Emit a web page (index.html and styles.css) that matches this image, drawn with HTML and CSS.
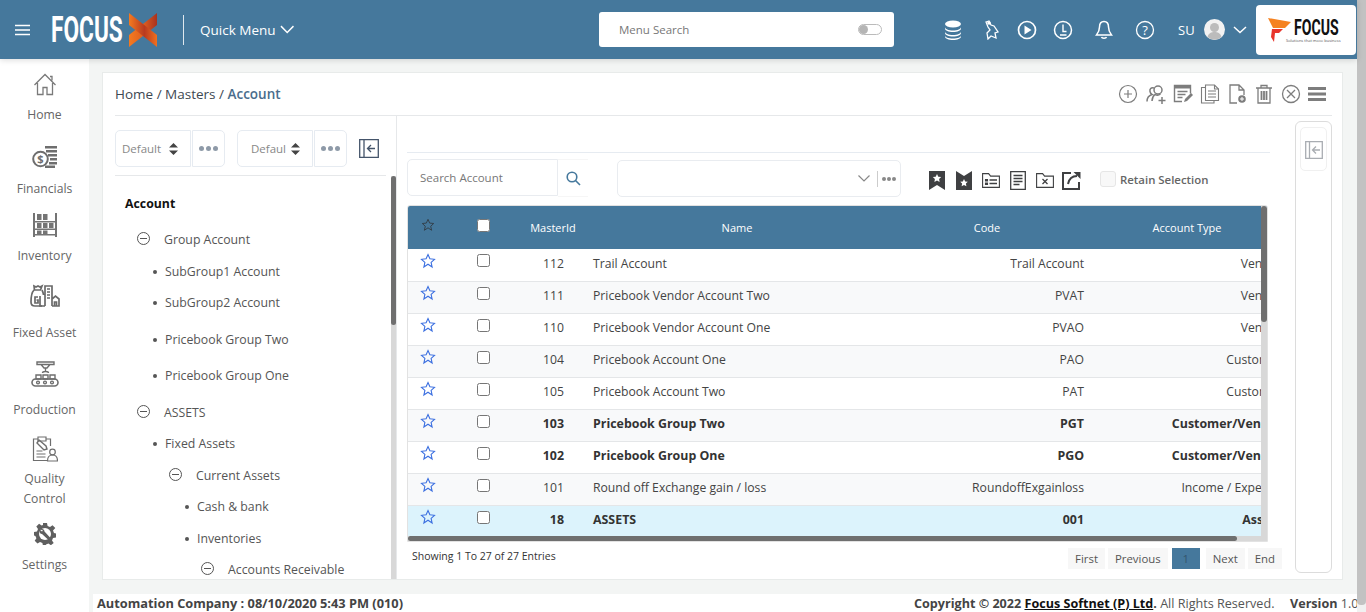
FILE: index.html
```html
<!DOCTYPE html>
<html lang="en">
<head>
  <meta charset="UTF-8">
  <title>Focus X - Account</title>
  <link rel="stylesheet" href="styles.css">
</head>
<body>
<div class="page">
  <header class="topbar">
    <svg class="burger" width="16" height="12" viewBox="0 0 16 12"><path d="M0 1.500h15M0 6h15M0 10.500h15" stroke="#fff" stroke-width="1.700"/></svg>
    <div class="brand">
      <span class="brand-word"><span>FOCUS</span></span>
      <svg width="28" height="34" viewBox="0 0 28 34">
        <defs>
          <linearGradient id="xa" x1="0" x2="1" y1="0" y2="0"><stop offset="0" stop-color="#f47a20"/><stop offset=".55" stop-color="#b93a1f"/><stop offset="1" stop-color="#f0701f"/></linearGradient>
          <linearGradient id="xb" x1="0" x2="1" y1="0" y2="0"><stop offset="0" stop-color="#f47a20"/><stop offset=".5" stop-color="#e0601f"/><stop offset="1" stop-color="#a8321f"/></linearGradient>
        </defs>
        <path d="M28 0v12L0 34V22z" fill="url(#xb)"/>
        <path d="M0 0l28 22v12L0 12z" fill="url(#xa)"/>
      </svg>
    </div>
    <div class="quick-menu">
      Quick Menu
      <svg width="15" height="9" viewBox="0 0 15 9"><path d="M1 1l6.500 6.500L14 1" fill="none" stroke="#fff" stroke-width="1.500"/></svg>
    </div>
    <div class="menu-search">
      <span>Menu Search</span>
      <i class="toggle"></i>
    </div>
    <svg class="ti-db" width="18" height="20" viewBox="0 0 18 20"><ellipse cx="9" cy="4" rx="8" ry="3.500" fill="#fff"/><path d="M1 7c0 2 3.500 3.500 8 3.500S17 9 17 7v1.500C17 10.500 13.500 12 9 12s-8-1.500-8-3.500zM1 11.500c0 2 3.500 3.500 8 3.500s8-1.500 8-3.500V13c0 2-3.500 3.500-8 3.500S1 15 1 13zM1 15.500c0 2 3.500 3 8 3s8-1 8-3v1c0 2-3.500 3.500-8 3.500s-8-1.500-8-3.500z" fill="#fff"/></svg>
    <svg class="ti-run" width="16" height="20" viewBox="0 0 16 20"><path d="M2 2l3-1 2 4 3 1 4 6-3 1 1 5-5-2-3 3-1-6 3-3-2-3z" fill="none" stroke="#fff" stroke-width="1.300"/><circle cx="5" cy="3" r="1.800" fill="#fff"/></svg>
    <svg class="ti-play" width="20" height="20" viewBox="0 0 20 20"><circle cx="10" cy="10" r="8.500" fill="none" stroke="#fff" stroke-width="1.700"/><path d="M7.500 5.500l7 4.500-7 4.500z" fill="#fff"/></svg>
    <svg class="ti-clock" width="20" height="20" viewBox="0 0 20 20"><circle cx="10" cy="10" r="8.500" fill="none" stroke="#fff" stroke-width="1.500"/><path d="M10 4.500v7h3.500M7 15h6.500" fill="none" stroke="#fff" stroke-width="1.400"/></svg>
    <svg class="ti-bell" width="18" height="20" viewBox="0 0 18 20"><path d="M9 1.500c-3 0-4.500 2.500-4.500 5.500 0 4-1 5.500-3 8h15c-2-2.500-3-4-3-8 0-3-1.500-5.500-4.500-5.500zM6.500 17c.5 1.500 4.500 1.500 5 0" fill="none" stroke="#fff" stroke-width="1.500"/></svg>
    <svg class="ti-help" width="20" height="20" viewBox="0 0 20 20"><circle cx="10" cy="10" r="8.500" fill="none" stroke="#fff" stroke-width="1.300"/><text x="10" y="14.500" text-anchor="middle" class="help-q">?</text></svg>
    <span class="user-code">SU</span>
    <svg class="avatar" width="21" height="21" viewBox="0 0 21 21"><circle cx="10.500" cy="10.500" r="10.500" fill="#f2f2f2"/><circle cx="10.500" cy="8.500" r="4.500" fill="#bcbcbc"/><path d="M3.500 18c1-4 4-5 7-5s6 1 7 5a10.500 10.500 0 0 1-14 0z" fill="#bcbcbc"/></svg>
    <svg class="user-chev" width="14" height="8" viewBox="0 0 14 8"><path d="M1 1l6 5.500L13 1" fill="none" stroke="#fff" stroke-width="1.500"/></svg>
    <div class="company-logo">
      <svg width="23" height="24" viewBox="0 0 23 24"><path d="M0 0l23 4-6 6H5z" fill="#f58220"/><path d="M4 11h11l-4 4H7l-1 9-3-5z" fill="#e8352b"/></svg>
      <div class="company-text">
        <span class="company-word"><span>FOCUS</span></span>
        <small>Solutions that move business</small>
      </div>
    </div>
  </header>

  <div class="workspace">
    <nav class="sidebar">
      <a class="nav-item nav-home">
        <svg width="24" height="24" viewBox="0 0 24 24" fill="none" stroke="#7a7a7a" stroke-width="1.300"><path d="M1.500 12L12 1.500 22.500 12M4.500 10v11.500h5.500v-7h4v7h5.500V10M17 3.500h2v4"/></svg>
        <span>Home</span>
      </a>
      <a class="nav-item nav-fin">
        <svg width="26" height="24" viewBox="0 0 26 24"><circle cx="8.500" cy="14" r="7.300" fill="none" stroke="#6e6e6e" stroke-width="2"/><path d="M13 1h12v2.500H13zM14 5h11v2.500H14zM16 9h9v2.500h-9zM18 13h7v2.500h-7zM17 17h8v2.500h-8zM13 20.500h10V23H13z" fill="#6e6e6e"/><text x="8.500" y="18" text-anchor="middle" class="coin">$</text></svg>
        <span>Financials</span>
      </a>
      <a class="nav-item nav-inv">
        <svg width="24" height="24" viewBox="0 0 24 24"><path d="M0 0h2v24H0zM22 0h2v24h-2zM2 8h20v1.500H2zM2 15.500h20V17H2zM2 21h20v1.500H2z" fill="#747474"/><path d="M4 1h4.500v6H4zM10 1h4.500v6H10zM4 10h4.500v5H4zM10 10h4.500v5H10zM16 10h4.500v5H16zM4 17.500h4.500V21H4zM10 17.500h4.500V21H10z" fill="#747474"/></svg>
        <span>Inventory</span>
      </a>
      <a class="nav-item nav-asset">
        <svg width="30" height="24" viewBox="0 0 30 24" fill="none" stroke="#6a6a6a" stroke-width="1.700"><path d="M4 2l2 1 2-1 2 1 2-1-1.500 4h-6zM4 6C1 9 1 14 1 18c0 3 1 4 4 4h7"/><path d="M12 6c1 2 1.500 3 1.500 5M15 22V2h7v20M17 5h3M17 8h3M17 11h3M17 14h3M10 12v10h5M22 15l3.500-3 3.500 3v7h-7M24.500 18h2v4h-2z"/><path d="M8 13H5v6h3v-3H6.500"/></svg>
        <span>Fixed Asset</span>
      </a>
      <a class="nav-item nav-prod">
        <svg width="28" height="26" viewBox="0 0 28 26" fill="none" stroke="#6e6e6e" stroke-width="1.400"><path d="M6 1h17v2.500H6zM10 3.500h9L16 7h-3zM14.500 7v3M11.500 12c0-2 6-2 6 0"/><path d="M5 14h5v4H5zM12 14h5v4h-5zM19 14h5v4h-5z"/><rect x="1" y="18" width="26" height="7" rx="3.500" stroke-width="1.600"/><circle cx="7" cy="21.500" r="1.400"/><circle cx="14" cy="21.500" r="1.400"/><circle cx="21" cy="21.500" r="1.400"/></svg>
        <span>Production</span>
      </a>
      <a class="nav-item nav-qc">
        <svg width="26" height="26" viewBox="0 0 26 26" fill="none" stroke="#6e6e6e" stroke-width="1.200"><path d="M6 3H1.500v21.500H16M14 3h4.500v7"/><path d="M6 1h8v4H6zM4.500 18h9M4.500 21h9M4.500 15h6"/><path d="M5 7l7 7 3-1-1-3-7-6z" stroke-width="1.400"/><circle cx="20.500" cy="16" r="2.800"/><path d="M15.500 25c0-5 2-6 5-6s5 1 5 6z"/></svg>
        <span>Quality<br>Control</span>
      </a>
      <a class="nav-item nav-set">
        <svg width="22" height="22" viewBox="0 0 22 22"><path d="M9 0h4l.6 3 2.400 1 2.500-1.700 2.800 2.800L19 7.600l1 2.400 2 .6v3.800l-3 .6-1 2.400 1.700 2.500-2.800 2.300-2.500-1.700-2.400 1-.5 1.400H9l-.6-3-2.400-1-2.500 1.700L.7 17.800 2.400 15.300l-1-2.400L0 12.500V9l3-.6 1-2.400L2.300 3.500 5.100.7l2.500 1.700L9 2z" fill="#5f5f5f"/><circle cx="11" cy="11" r="6" fill="#fff"/><path d="M6.500 6.500c2-1 4 0 4 2l6 6.500-2 2-6.500-6c-2 0-3-2-2-4l2 1.500 1-1z" fill="#5f5f5f"/></svg>
        <span>Settings</span>
      </a>
    </nav>

    <div class="main-col">
      <section class="card">
        <div class="card-head">
          <div class="crumbs">Home / Masters / <b>Account</b></div>
          <div class="actions">
            <svg width="20" height="20" viewBox="0 0 20 20" fill="none" stroke="#7d7d7d" stroke-width="1.200"><circle cx="10" cy="10" r="8.500"/><path d="M10 6v8M6 10h8"/></svg>
            <svg width="20" height="20" viewBox="0 0 20 20" fill="none" stroke="#7d7d7d" stroke-width="1.500"><circle cx="12" cy="6" r="4"/><path d="M8 4C5 3 3.500 5 4 7.500c.3 1.500 1 2.500 2 3-3 1-5 3-5 7M6 17c0-3 1-5 3-6.500 2 1 3.500 1 5.500-.5M16 13v7M12.500 16.500h7"/></svg>
            <svg width="20" height="20" viewBox="0 0 20 20" fill="none" stroke="#7d7d7d" stroke-width="1.400"><path d="M9 17.500H1.500V1.500h16v8"/><path d="M1 2h17v2.500H1z" fill="#7d7d7d" stroke="none"/><path d="M4.500 7.500h10M4.500 10.500h8M4.500 13.500h5"/><path d="M11 18l1-3 6-6 2 2-6 6z" fill="#7d7d7d" stroke="none"/></svg>
            <svg width="20" height="20" viewBox="0 0 20 20" fill="none" stroke="#7d7d7d" stroke-width="1.100"><path d="M6 3.500H1.500v15.500h12.500v-3"/><path d="M5.500 1h9l4 4v11.500h-13z"/><path d="M14.500 1v4h4M8 7h8M8 10h8M8 13h8"/></svg>
            <svg width="20" height="20" viewBox="0 0 20 20" fill="none" stroke="#7d7d7d" stroke-width="1.300"><path d="M9 19H2V1h9l5 5v5M11 1v5h5"/><circle cx="14" cy="15" r="3.800" fill="#7d7d7d" stroke="none"/><path d="M12 15h4M14 13v4" stroke="#fff" stroke-width="1"/></svg>
            <svg width="18" height="20" viewBox="0 0 18 20" fill="none" stroke="#7d7d7d" stroke-width="1.300"><path d="M1 4h16M6 3.500V1.500h6v2M3 4.500v14.500h12V4.500"/><path d="M6.500 7v9M9 7v9M11.500 7v9" stroke-width="1.800"/></svg>
            <svg width="20" height="20" viewBox="0 0 20 20" fill="none" stroke="#7d7d7d" stroke-width="1.300"><circle cx="10" cy="10" r="8.500"/><path d="M6 6l8 8M14 6l-8 8"/></svg>
            <svg width="18" height="14" viewBox="0 0 18 14"><path d="M0 0h18v3H0zM0 5.500h18v3H0zM0 11h18v3H0z" fill="#7d7d7d"/></svg>
          </div>
        </div>

        <div class="card-body">
          <div class="tree-pane">
            <div class="tree-tools">
              <div class="select-box">Default <svg width="9" height="12" viewBox="0 0 9 12"><path d="M4.500 0L9 4.500H0zM4.500 12L0 7.500h9z" fill="#444"/></svg></div>
              <div class="dots-box"><i></i><i></i><i></i></div>
              <div class="select-box second">Defaul <svg width="9" height="12" viewBox="0 0 9 12"><path d="M4.500 0L9 4.500H0zM4.500 12L0 7.500h9z" fill="#444"/></svg></div>
              <div class="dots-box"><i></i><i></i><i></i></div>
              <svg class="collapse-ico" width="20" height="19" viewBox="0 0 20 19" fill="none" stroke="#44546a" stroke-width="1.300"><path d="M.7.700h18.600v17.600H.7zM5 .7v17.600"/><path d="M16 9.500H8.500M12 6L8.500 9.500 12 13"/></svg>
            </div>
            <div class="tree-scroll">
              <div class="tree">
                <div class="tree-title">Account</div>
                <div class="tree-row lvl1 first"><span class="minus"></span>Group Account</div>
                <div class="tree-row lvl2 bullet">SubGroup1 Account</div>
                <div class="tree-row lvl2 bullet">SubGroup2 Account</div>
                <div class="tree-row lvl2 bullet tall">Pricebook Group Two</div>
                <div class="tree-row lvl2 bullet tall">Pricebook Group One</div>
                <div class="tree-row lvl1 tall"><span class="minus"></span>ASSETS</div>
                <div class="tree-row lvl2 bullet">Fixed Assets</div>
                <div class="tree-row lvl3"><span class="minus"></span>Current Assets</div>
                <div class="tree-row lvl4 bullet">Cash &amp; bank</div>
                <div class="tree-row lvl4 bullet">Inventories</div>
                <div class="tree-row lvl5"><span class="minus"></span>Accounts Receivable</div>
              </div>
              <div class="sb-v tree-sb"><i></i></div>
            </div>
          </div>

          <div class="list-pane">
            <div class="list-tools">
              <div class="search-box">Search Account</div>
              <div class="search-btn"><svg width="15" height="15" viewBox="0 0 15 15" fill="none" stroke="#45789c" stroke-width="1.600"><circle cx="6" cy="6" r="4.800"/><path d="M9.500 9.500L14 14"/></svg></div>
              <div class="view-select">
                <svg width="12" height="7" viewBox="0 0 12 7"><path d="M.5.500L6 6 11.500.5" fill="none" stroke="#888" stroke-width="1.200"/></svg>
                <span class="vs-sep"></span>
                <span class="dots-inline"><i></i><i></i><i></i></span>
              </div>
              <div class="list-icons">
                <svg width="16" height="19" viewBox="0 0 16 19"><path d="M0 0h16v19l-8-5-8 5z" fill="#3f4042"/><path d="M8 3l1.300 2.700 2.900.4-2.100 2 .5 2.900L8 9.600 5.400 11l.5-2.900-2.100-2 2.900-.4z" fill="#fff"/></svg>
                <svg width="16" height="19" viewBox="0 0 16 19"><path d="M0 0l8 5 8-5v19H0z" fill="#3f4042"/><path d="M8 8l1.200 2.400 2.600.4-1.900 1.800.5 2.600L8 14l-2.400 1.200.5-2.600-1.900-1.800 2.600-.4z" fill="#fff"/></svg>
                <svg width="18" height="15" viewBox="0 0 18 15" fill="none" stroke="#3f4042" stroke-width="1.100"><path d="M.6 14.400V.6h6l2 2.500h8.800v11.300z"/><path d="M3.500 6.500h2v1.500h-2zM3.500 10h2v1.500h-2z" fill="#3f4042"/><path d="M7.500 7h7.500M7.500 10.500h7.500" stroke-width="1.400"/></svg>
                <svg width="16" height="19" viewBox="0 0 16 19" fill="none" stroke="#3f4042" stroke-width="1.300"><path d="M.7.700h14.600v17.600H.7z"/><path d="M3.500 4.500h9M3.500 7.500h9M3.500 10.500h9M3.500 13.500h6" stroke-width="1.400"/></svg>
                <svg width="18" height="15" viewBox="0 0 18 15" fill="none" stroke="#3f4042" stroke-width="1.100"><path d="M.6 14.400V.6h6l2 2.500h8.800v11.300z"/><path d="M6.500 6l5 5M11.500 6l-5 5" stroke-width="1.300"/></svg>
                <svg width="19" height="19" viewBox="0 0 19 19" fill="none" stroke="#3f4042" stroke-width="2"><path d="M9 2H1v16h16v-7"/><path d="M6 13c1-5 4-8 9-8"/><path d="M11.500 1H18.500v7z" fill="#3f4042" stroke="none"/></svg>
              </div>
              <label class="retain"><i></i>Retain Selection</label>
            </div>

            <div class="grid-wrap">
              <table class="grid">
                <colgroup>
                  <col class="c-star"><col class="c-check"><col class="c-id"><col class="c-name"><col class="c-code"><col class="c-type">
                </colgroup>
                <thead>
                  <tr>
                    <th class="th-ctl"><svg class="star" width="14" height="14" viewBox="0 0 16 16"><path d="M8 1.500l1.900 4.300 4.600.5-3.400 3.100 1 4.600L8 11.200l-4.100 2.800 1-4.600L1.500 6.300l4.600-.5z" fill="none" stroke="#333f4a" stroke-width="1.100"/></svg></th>
                    <th class="th-ctl"><input type="checkbox" class="head-check"></th>
                    <th>MasterId</th><th>Name</th><th>Code</th><th>Account Type</th>
                  </tr>
                </thead>
                <tbody id="rows"></tbody>
              </table>
              <div class="sb-v grid-sb"><i></i></div>
              <div class="sb-h"><i></i></div>
            </div>

            <div class="list-foot">
              <span class="entries">Showing 1 To 27 of 27 Entries</span>
              <div class="pager">
                <a>First</a><a>Previous</a><a class="active">1</a><a class="next">Next</a><a>End</a>
              </div>
            </div>
          </div>

          <aside class="side-panel">
            <div class="side-btn">
              <svg width="18" height="18" viewBox="0 0 18 18" fill="none" stroke="#a9adb2" stroke-width="1.300"><path d="M.7.700h16.600v16.600H.7zM4.500.7v16.600"/><path d="M15 9H7.500M11 5.500L7.500 9l3.500 3.500"/></svg>
            </div>
          </aside>
        </div>
      </section>

      <footer class="status">
        <span class="st-company">Automation Company : 08/10/2020 5:43 PM (010)</span>
        <span class="st-copy"><b>Copyright © 2022 <u>Focus Softnet (P) Ltd</u>.</b> All Rights Reserved.</span>
        <span class="st-ver"><b>Version</b> 1.0.0</span>
      </footer>
    </div>
  </div>
</div>
<div class="page-scroll"><i></i></div>

<script>
  var data = [
    ["112", "Trail Account", "Trail Account", "Vendor"],
    ["111", "Pricebook Vendor Account Two", "PVAT", "Vendor"],
    ["110", "Pricebook Vendor Account One", "PVAO", "Vendor"],
    ["104", "Pricebook Account One", "PAO", "Customer"],
    ["105", "Pricebook Account Two", "PAT", "Customer"],
    ["103", "Pricebook Group Two", "PGT", "Customer/Vendor", "bold"],
    ["102", "Pricebook Group One", "PGO", "Customer/Vendor", "bold"],
    ["101", "Round off Exchange gain / loss", "RoundoffExgainloss", "Income / Expense"],
    ["18", "ASSETS", "001", "Assets", "bold sel"]
  ];
  var star = '<svg class="star" width="16" height="16" viewBox="0 0 16 16"><path d="M8 1.500l1.900 4.300 4.600.5-3.400 3.100 1 4.600L8 11.200l-4.100 2.800 1-4.600L1.500 6.300l4.600-.5z" fill="none" stroke="#3b6fe0" stroke-width="1.100"/></svg>';
  var html = "";
  data.forEach(function (r) {
    html += '<tr class="' + (r[4] || "") + '"><td>' + star + '</td><td><input type="checkbox"></td>' +
      '<td class="num">' + r[0] + '</td><td>' + r[1] + '</td><td class="right">' + r[2] + '</td><td class="right">' + r[3] + '</td></tr>';
  });
  document.getElementById("rows").innerHTML = html;
</script>
</body>
</html>
```

FILE: styles.css
```css
* { box-sizing: border-box; }

html, body {
  margin: 0;
  height: 100%;
  overflow: hidden;
}

body {
  display: flex;
  font-family: 'Open Sans', 'Noto Sans', sans-serif;
  font-size: 12px;
  color: #444;
  background: #f3f5f4;
}

.page {
  flex: 1;
  min-width: 0;
  display: flex;
  flex-direction: column;
}

.page-scroll {
  width: 9px;
  flex: none;
  background: #f1f1f1;
}

.page-scroll i {
  display: block;
  height: 605px;
  border-radius: 0 0 4px 4px;
  background: #c2c2c2;
}

/* top bar */
.topbar {
  height: 59px;
  flex: none;
  display: flex;
  align-items: center;
  background: #45789c;
  color: #fff;
  box-shadow: 0 1px 6px rgba(0, 0, 0, 0.15);
  position: relative;
  z-index: 2;
}

.topbar > * { flex: none; }

.burger { margin-left: 15px; }

.brand {
  display: flex;
  align-items: center;
  margin-left: 20px;
  width: 107px;
}

.brand-word {
  display: block;
  width: 78px;
  height: 40px;
  line-height: 40px;
  font-family: Roboto, sans-serif;
  font-weight: 700;
  font-size: 36px;
}

.brand-word span {
  display: inline-block;
  transform: scaleX(0.63);
  transform-origin: left center;
}

.quick-menu {
  display: flex;
  align-items: center;
  gap: 4px;
  height: 30px;
  margin-left: 25px;
  padding-left: 16px;
  border-left: 1px solid #dfe8ee;
  font-size: 13.500px;
  width: 111px;
  white-space: nowrap;
}

.menu-search {
  width: 295px;
  height: 35px;
  margin-left: 305px;
  padding: 0 12px 0 20px;
  display: flex;
  align-items: center;
  justify-content: space-between;
  background: #fff;
  border-radius: 3px;
  color: #777;
  font-size: 11.500px;
}

.toggle {
  display: block;
  width: 24px;
  height: 11px;
  border: 1px solid #bbb;
  border-radius: 6px;
  position: relative;
}

.toggle::before {
  content: "";
  position: absolute;
  left: 0;
  top: 0;
  width: 9px;
  height: 9px;
  border-radius: 50%;
  background: #b5b5b5;
}

.ti-db { margin-left: 50px; }
.ti-run { margin-left: 22px; }
.ti-play { margin-left: 17px; }
.ti-clock { margin-left: 16px; }
.ti-bell { margin-left: 22px; }
.ti-help { margin-left: 22px; }

.help-q {
  font-family: 'Open Sans', sans-serif;
  font-size: 13px;
  fill: #fff;
}

.user-code {
  width: 17px;
  margin-left: 23px;
  font-size: 13px;
}

.avatar { margin-left: 9px; }
.user-chev { margin-left: 8px; }

.company-logo {
  width: 100px;
  height: 50px;
  margin-left: 9px;
  padding-left: 12px;
  display: flex;
  align-items: center;
  gap: 3px;
  background: #fff;
  border-radius: 4px;
  color: #111;
}

.company-text {
  width: 56px;
  padding-top: 2px;
}

.company-word {
  display: block;
  height: 19px;
  line-height: 19px;
  font-family: Roboto, sans-serif;
  font-weight: 700;
  font-size: 22px;
}

.company-word span {
  display: inline-block;
  transform: scaleX(0.64);
  transform-origin: left center;
}

.company-text small {
  display: block;
  margin: 1px 0 0 -8px;
  font-size: 4px;
  line-height: 5px;
  color: #555;
  white-space: nowrap;
}

/* below the bar */
.workspace {
  flex: 1;
  min-height: 0;
  display: flex;
}

.sidebar {
  width: 89px;
  flex: none;
  padding-top: 11px;
  background: #fff;
  display: flex;
  flex-direction: column;
}

.nav-item {
  display: flex;
  flex-direction: column;
  align-items: center;
  text-align: center;
  color: #666;
  font-size: 12.200px;
  line-height: 20px;
}

.nav-item svg { flex: none; margin-top: 3px; }

.coin {
  font-family: 'Open Sans', sans-serif;
  font-size: 11px;
  font-weight: 700;
  fill: #6e6e6e;
}

.nav-home { height: 72px; }
.nav-home span { margin-top: 8px; }
.nav-fin { height: 68px; }
.nav-fin span { margin-top: 10px; }
.nav-inv { height: 71px; }
.nav-inv span { margin-top: 9px; }
.nav-asset { height: 77px; }
.nav-asset span { margin-top: 15px; }
.nav-prod { height: 75px; }
.nav-prod span { margin-top: 13px; }
.nav-qc { height: 86px; }
.nav-qc span { margin-top: 7px; }
.nav-set svg { margin-top: 4px; }
.nav-set span { margin-top: 10px; }

.main-col {
  flex: 1;
  min-width: 0;
  display: flex;
  flex-direction: column;
}

.card {
  height: 508px;
  margin: 13px 14px 0 13px;
  padding: 0 10px 0 12px;
  background: #fff;
  border: 1px solid #e8ebea;
  display: flex;
  flex-direction: column;
}

.card-head {
  height: 43px;
  flex: none;
  display: flex;
  align-items: center;
  justify-content: space-between;
  padding-right: 6px;
  border-bottom: 1px solid #e6e8ea;
}

.crumbs {
  font-size: 13.500px;
  color: #3d4852;
}

.crumbs b {
  font-weight: 600;
  color: #4a6d8c;
}

.actions {
  display: flex;
  align-items: center;
  gap: 7.400px;
}

.actions svg { flex: none; }

.card-body {
  flex: 1;
  min-height: 0;
  display: flex;
}

/* left tree */
.tree-pane {
  width: 282px;
  flex: none;
  display: flex;
  flex-direction: column;
  border-right: 1px solid #e6e8ea;
}

.tree-tools {
  width: 271px;
  height: 60px;
  flex: none;
  padding-top: 14px;
  display: flex;
  align-items: flex-start;
  border-bottom: 1px solid #e6e8ea;
}

.select-box {
  width: 76px;
  height: 37px;
  flex: none;
  padding: 0 6px;
  display: flex;
  align-items: center;
  justify-content: space-between;
  border: 1px solid #e6ebf1;
  border-radius: 5px 0 0 5px;
  color: #888;
  font-size: 11.500px;
}

.select-box svg { margin-right: 6px; }
.select-box.second { margin-left: 12px; padding-left: 13px; }

.dots-box {
  width: 33px;
  height: 37px;
  flex: none;
  margin-left: 1px;
  display: flex;
  align-items: center;
  justify-content: center;
  gap: 2px;
  border: 1px solid #e6ebf1;
  border-radius: 0 5px 5px 0;
}

.dots-box i, .dots-inline i {
  display: block;
  width: 5px;
  height: 5px;
  border-radius: 50%;
  background: #8e9aa8;
}

.collapse-ico { flex: none; margin: 9px 0 0 12px; }

.tree-scroll {
  flex: 1;
  min-height: 0;
  display: flex;
  overflow: hidden;
}

.tree {
  flex: 1;
  min-width: 0;
  padding: 18px 0 0 10px;
  font-size: 12.300px;
  color: #555;
}

.tree-title {
  height: 19px;
  line-height: 19px;
  font-weight: 700;
  color: #111;
}

.tree-row {
  height: 31.500px;
  line-height: 31.500px;
  position: relative;
  white-space: nowrap;
}

.tree-row.first { margin-top: 11px; }
.tree-row.tall { margin-top: 5px; }
.lvl1 { padding-left: 39px; }
.lvl2 { padding-left: 40px; }
.lvl3 { padding-left: 71px; }
.lvl4 { padding-left: 72px; }
.lvl5 { padding-left: 103px; }

.bullet::before {
  content: "";
  position: absolute;
  top: 14px;
  width: 4px;
  height: 4px;
  margin-left: -12px;
  border-radius: 50%;
  background: #555;
}

.minus {
  position: absolute;
  top: 8px;
  width: 13px;
  height: 13px;
  margin-left: -27px;
  border: 1px solid #555;
  border-radius: 50%;
}

.minus::before {
  content: "";
  position: absolute;
  left: 2px;
  right: 2px;
  top: 5px;
  height: 1px;
  background: #555;
}

.sb-v {
  width: 5px;
  background: #d8d8d8;
}

.sb-v i {
  display: block;
  background: #6f6f6f;
  border-radius: 3px;
}

.tree-sb { flex: none; }
.tree-sb i { height: 149px; }

/* list */
.list-pane {
  width: 873px;
  flex: none;
  padding: 36px 0 0 10px;
  display: flex;
  flex-direction: column;
}

.list-tools {
  height: 53px;
  flex: none;
  padding-top: 6px;
  border-top: 1px solid #e6ebf1;
  display: flex;
  align-items: flex-start;
}

.search-box {
  width: 151px;
  height: 37px;
  flex: none;
  line-height: 35px;
  padding-left: 12px;
  border: 1px solid #e9ecf0;
  border-radius: 5px 0 0 5px;
  color: #777;
  font-size: 11.500px;
}

.search-btn {
  width: 30px;
  height: 38px;
  flex: none;
  display: flex;
  align-items: center;
  justify-content: center;
  border-top: 1px solid #f6f6f6;
  border-bottom: 1px solid #f6f6f6;
}

.view-select {
  width: 284px;
  height: 37px;
  flex: none;
  margin: 1px 0 0 29px;
  padding-right: 4px;
  display: flex;
  align-items: center;
  justify-content: flex-end;
  border: 1px solid #e9ecf0;
  border-radius: 5px;
}

.vs-sep {
  width: 1px;
  height: 16px;
  margin: 0 4px 0 7px;
  background: #ccc;
}

.dots-inline {
  display: flex;
  gap: 1px;
}

.dots-inline i {
  width: 4px;
  height: 4px;
  background: #888;
}

.list-icons {
  flex: none;
  margin: 12px 0 0 22px;
  display: grid;
  grid-template-columns: repeat(6, 27px);
  align-items: center;
  justify-items: center;
}

.retain {
  flex: none;
  display: flex;
  align-items: center;
  gap: 4px;
  margin: 12px 0 0 15px;
  font-weight: 600;
  font-size: 11.400px;
  color: #666;
  white-space: nowrap;
}

.retain i {
  width: 16px;
  height: 16px;
  border: 1px solid #e6e6e6;
  border-radius: 3px;
  background: #f8f8f8;
}

.grid-wrap {
  width: 861px;
  height: 337px;
  flex: none;
  position: relative;
  overflow: hidden;
  border: 1px solid #e2e2e2;
  border-radius: 3px 3px 0 0;
}

.grid {
  width: 878px;
  table-layout: fixed;
  border-collapse: collapse;
  font-size: 12.200px;
  color: #444;
}

.c-star { width: 40px; }
.c-check { width: 70px; }
.c-id { width: 70px; }
.c-name { width: 298px; }
.c-code { width: 202px; }
.c-type { width: 198px; }

.grid th {
  height: 43px;
  padding: 0 0 1px;
  background: #45789c;
  color: #fff;
  font-weight: 400;
  font-size: 11px;
  text-align: center;
}

.grid th.th-ctl { padding-bottom: 7px; }

.grid td {
  height: 32px;
  padding: 0 0 3px 5px;
  border-bottom: 1px solid #e4e6e8;
  white-space: nowrap;
  overflow: hidden;
}

.grid td:nth-child(1), .grid td:nth-child(2) {
  padding: 0 0 10px;
  text-align: center;
}

.grid td.num { text-align: right; padding-right: 24px; }
.grid td.right { text-align: right; padding-right: 4px; }
.grid tbody tr:nth-child(even) td { background: #f8f9fa; }
.grid tr.bold td { font-weight: 700; font-size: 12.400px; color: #333; }
.grid tr.sel td { background: #dcf3fc; }

.grid input {
  width: 13px;
  height: 13px;
  margin: 0;
  vertical-align: middle;
}

.star { vertical-align: middle; }

.grid-sb {
  position: absolute;
  right: 0;
  top: 0;
  bottom: 0;
  width: 6px;
}

.grid-sb i { height: 116px; }

.sb-h {
  position: absolute;
  left: 0;
  right: 6px;
  bottom: 0;
  height: 5px;
  background: #d8d8d8;
}

.sb-h i {
  display: block;
  width: 829px;
  height: 5px;
  border-radius: 3px;
  background: #6f6f6f;
}

.list-foot {
  flex: 1;
  display: flex;
  align-items: flex-start;
  justify-content: space-between;
  padding: 6px 0 0 5px;
  margin-right: -12px;
}

.entries {
  margin-top: -1px;
  font-size: 10.500px;
  color: #333;
  line-height: 18px;
}

.pager {
  display: flex;
  font-size: 11.400px;
  color: #555;
}

.pager a {
  height: 21px;
  line-height: 21px;
  padding: 0 7px;
  margin-left: 3px;
  background: #f7f7f7;
}

.pager a.active {
  width: 28px;
  margin-left: 4px;
  text-align: center;
  background: #45789c;
  color: #34566e;
}

.pager a.next { margin-left: 6px; }

.side-panel {
  width: 37px;
  height: 452px;
  flex: none;
  margin: 5px 0 0 25px;
  padding: 5px 4px;
  border: 1px solid #dcdcdc;
  border-radius: 6px;
}

.side-btn {
  height: 44px;
  display: flex;
  align-items: center;
  justify-content: center;
  padding-top: 2px;
  border: 1px solid #f0f0f0;
  border-radius: 5px;
}

/* bottom line */
.status {
  height: 19px;
  margin: 14px 0 0 4px;
  padding-left: 4px;
  display: flex;
  align-items: center;
  background: #fff;
  font-size: 12.600px;
  white-space: nowrap;
  overflow: hidden;
  color: #555;
}

.status b { color: #444; }

.st-company {
  width: 817px;
  flex: none;
  font-weight: 700;
  font-size: 12.800px;
  color: #444;
}

.st-copy { width: 376px; flex: none; }
.st-copy u { color: #111; }
.st-ver { flex: none; }
```
